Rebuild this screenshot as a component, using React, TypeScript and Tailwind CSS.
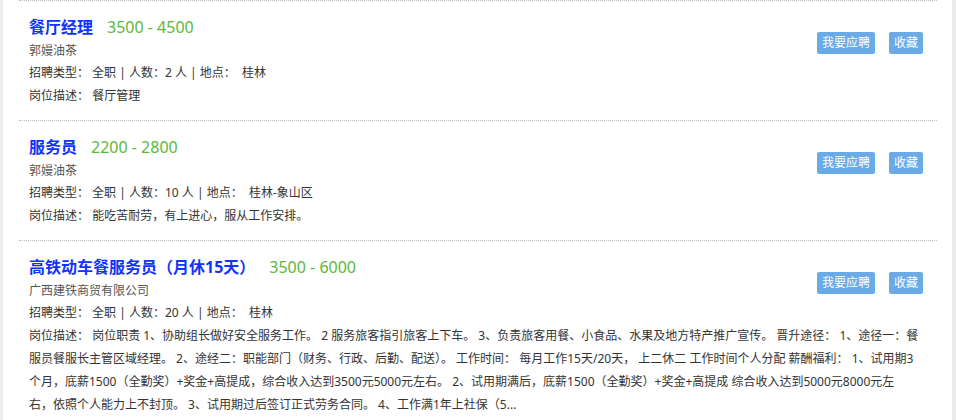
import React from "react";

type Job = {
  title: string;
  salary: string;
  company: string;
  count: string;
  place: string;
  desc: string[];
};

const jobs: Job[] = [
  {
    title: "餐厅经理",
    salary: "3500 - 4500",
    company: "郭嫚油茶",
    count: "2",
    place: "桂林",
    desc: ["餐厅管理"],
  },
  {
    title: "服务员",
    salary: "2200 - 2800",
    company: "郭嫚油茶",
    count: "10",
    place: "桂林-象山区",
    desc: ["能吃苦耐劳，有上进心，服从工作安排。"],
  },
  {
    title: "高铁动车餐服务员（月休15天）",
    salary: "3500 - 6000",
    company: "广西建铁商贸有限公司",
    count: "20",
    place: "桂林",
    desc: [
      "岗位职责 1、协助组长做好安全服务工作。 2 服务旅客指引旅客上下车。 3、负责旅客用餐、小食品、水果及地方特产推广宣传。 晋升途径： 1、途径一：餐",
      "服员餐服长主管区域经理。 2、途经二：职能部门（财务、行政、后勤、配送）。 工作时间： 每月工作15天/20天， 上二休二 工作时间个人分配 薪酬福利： 1、试用期3",
      "个月，底薪1500（全勤奖）+奖金+高提成，综合收入达到3500元5000元左右。 2、试用期满后，底薪1500（全勤奖）+奖金+高提成 综合收入达到5000元8000元左",
      "右，依照个人能力上不封顶。 3、试用期过后签订正式劳务合同。 4、工作满1年上社保（5...",
    ],
  },
];

function JobItem({ job }: { job: Job }) {
  return (
    <div className="relative border-t border-dotted border-[#bdbdbd] pt-[14px] pb-[13px] pl-[10px] pr-[10px]">
      <div className="absolute right-[14px] top-[31px] flex gap-[14px]">
        <button className="h-[22px] rounded-[2px] bg-[#6aaae6] px-[5px] text-[12px] leading-[22px] text-white">
          我要应聘
        </button>
        <button className="h-[22px] rounded-[2px] bg-[#6aaae6] px-[5px] text-[12px] leading-[22px] text-white">
          收藏
        </button>
      </div>
      <div className="flex h-[24px] items-center">
        <span className="text-[16px] font-bold leading-[24px] text-[#1034ff]">{job.title}</span>
        <span className="ml-[14px] text-[16px] leading-[24px] text-[#5cb83a]">{job.salary}</span>
      </div>
      <div className="text-[12px] leading-[23px] text-[#555]">{job.company}</div>
      <div className="text-[12px] leading-[22px] text-[#333]">
        招聘类型：&nbsp;全职 | 人数：{job.count} 人 | 地点：&nbsp;&nbsp;{job.place}
      </div>
      <div className="text-[12px] leading-[23px] text-[#333]">
        {job.desc.map((line, i) => (
          <React.Fragment key={i}>
            {i === 0 ? "岗位描述：  " : ""}
            {line}
            {i < job.desc.length - 1 ? <br /> : null}
          </React.Fragment>
        ))}
      </div>
    </div>
  );
}

export default function App() {
  return (
    <div
      className="flex h-[420px] w-[956px] overflow-hidden bg-white"
      style={{ fontFamily: '"Noto Sans", "Noto Sans CJK SC", sans-serif' }}
    >
      <div className="w-[3px] shrink-0 bg-[#ececec]" />
      <div className="flex-1 pl-[16px] pr-[15px]">
        {jobs.map((j, i) => (
          <JobItem key={i} job={j} />
        ))}
      </div>
      <div className="w-[4px] shrink-0 bg-[#ececec]" />
    </div>
  );
}
